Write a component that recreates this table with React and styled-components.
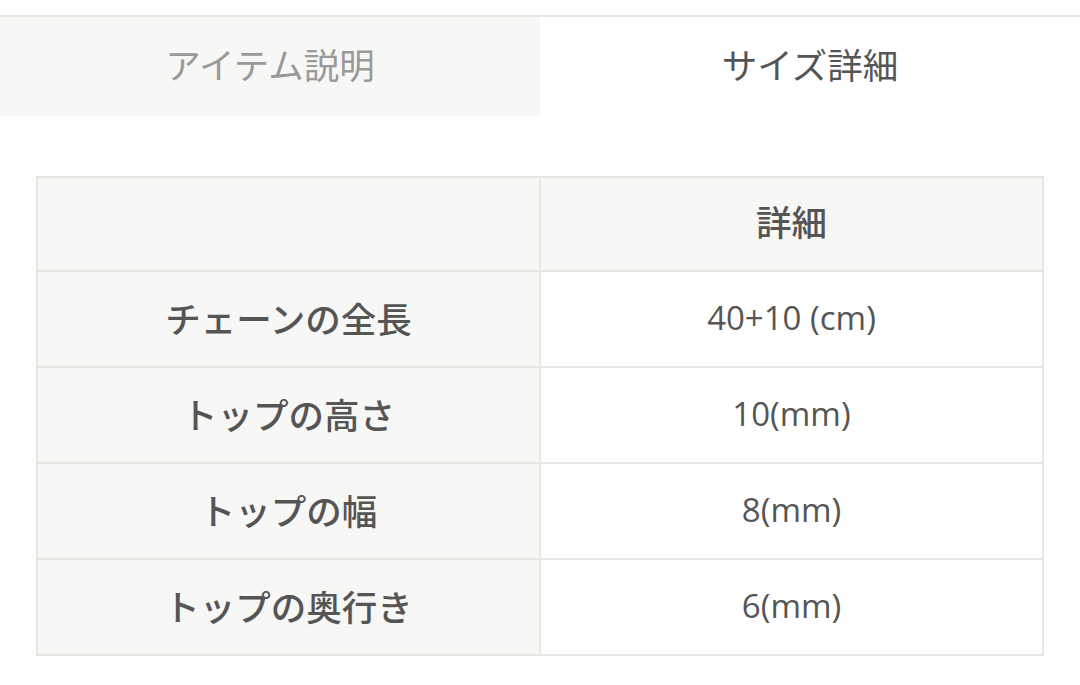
import React from "react";
import styled, { createGlobalStyle } from "styled-components";

const GlobalStyle = createGlobalStyle`
  html, body {
    margin: 0;
    padding: 0;
    background: #ffffff;
  }
  body {
    font-family: "Open Sans", "Noto Sans CJK JP", sans-serif;
    color: #555555;
  }
`;

const Page = styled.div`
  width: 1080px;
  padding-top: 15px;
`;

const Tabs = styled.nav`
  display: grid;
  grid-template-columns: 540px 1fr;
  border-top: 2px solid #e9e8e4;
`;

const Tab = styled.div`
  display: flex;
  align-items: center;
  justify-content: center;
  height: 99px;
  padding-bottom: 6px;
  box-sizing: border-box;
  font-size: 35.5px;
  background: ${(props) => (props.active ? "#ffffff" : "#f7f7f5")};
  color: ${(props) => (props.active ? "#555555" : "#9a9a9a")};
`;

const Panel = styled.section`
  padding: 60px 36px 0;
`;

const Table = styled.table`
  width: 100%;
  border-collapse: collapse;
  table-layout: fixed;
`;

const Cell = styled.td`
  height: 96px;
  padding: 0 0 4px;
  box-sizing: border-box;
  border: 2px solid #e8e6e1;
  text-align: center;
  vertical-align: middle;
  font-size: ${(props) => (props.label ? "35.5px" : "33px")};
  font-weight: ${(props) => (props.label ? 500 : 400)};
  background: ${(props) => (props.label ? "#f7f7f5" : "#ffffff")};
  color: #555555;
`;

const HeadCell = styled.th`
  height: 94px;
  padding: 0 0 8px;
  box-sizing: border-box;
  border: 2px solid #e8e6e1;
  text-align: center;
  vertical-align: middle;
  font-size: 35.5px;
  font-weight: 500;
  background: #f7f7f5;
  color: #555555;
`;

const rows = [
  { name: "チェーンの全長", value: "40+10 (cm)" },
  { name: "トップの高さ", value: "10(mm)" },
  { name: "トップの幅", value: "8(mm)" },
  { name: "トップの奥行き", value: "6(mm)" },
];

export default function App() {
  return (
    <>
      <GlobalStyle />
      <Page>
        <Tabs>
          <Tab>アイテム説明</Tab>
          <Tab active>サイズ詳細</Tab>
        </Tabs>
        <Panel>
          <Table>
            <thead>
              <tr>
                <HeadCell />
                <HeadCell>詳細</HeadCell>
              </tr>
            </thead>
            <tbody>
              {rows.map((row) => (
                <tr key={row.name}>
                  <Cell label>{row.name}</Cell>
                  <Cell>{row.value}</Cell>
                </tr>
              ))}
            </tbody>
          </Table>
        </Panel>
      </Page>
    </>
  );
}
